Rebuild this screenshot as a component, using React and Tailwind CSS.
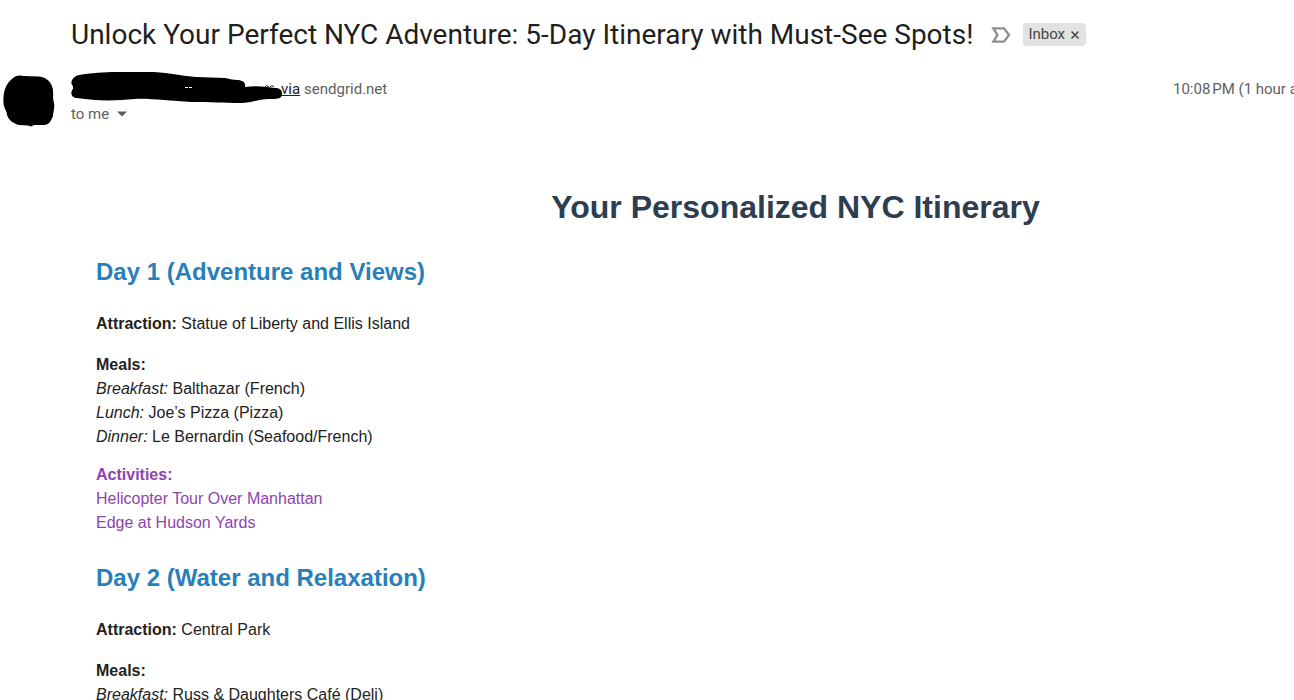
const days = [
  {
    title: 'Day 1 (Adventure and Views)',
    attraction: 'Statue of Liberty and Ellis Island',
    meals: [
      ['Breakfast:', 'Balthazar (French)'],
      ['Lunch:', 'Joe’s Pizza (Pizza)'],
      ['Dinner:', 'Le Bernardin (Seafood/French)'],
    ],
    activities: ['Helicopter Tour Over Manhattan', 'Edge at Hudson Yards'],
  },
  {
    title: 'Day 2 (Water and Relaxation)',
    attraction: 'Central Park',
    meals: [['Breakfast:', 'Russ & Daughters Café (Deli)']],
    activities: [],
  },
];

function ImportantMarker() {
  return (
    <button type="button" aria-label="Mark as important" className="flex h-6 w-5 shrink-0 items-center justify-center">
      <svg viewBox="0 0 20 16" className="h-4 w-5" fill="none" stroke="#8e9193" strokeWidth="2.4">
        <path d="M2.400 1.400H13L18 8L13 14.600H2.400L6.400 8Z" />
      </svg>
    </button>
  );
}

function Avatar() {
  return (
    <svg viewBox="0 0 52 54" className="h-[54px] w-[52px] shrink-0" aria-hidden="true">
      <path d="M10 3C13 0 17 0 21 1L36 1.500C44 2 49 8 50 15C50.500 20 49.500 24 51 28C52 34 50 37 50 41C48 46 46 50 41 50L31 50L28 51.500L25 50.500L16 50C9 48 6 45 4 40C4 36 1 34 0.500 28C0 18 2 9 10 3Z" />
    </svg>
  );
}

function HiddenSender() {
  return (
    <svg viewBox="0 0 212 34" className="h-[34px] w-[212px] shrink-0" aria-hidden="true">
      <path d="M8 3C24 0 55 -1 83 0C99 1 112 4 125 5L154 6C159 7 163 8 166 8C172 8 175 11 174 15C186 13 197 15 204 16C212 16 212 22 210 25C208 27 203 27 198 27C187 27 181 31 170 31C152 31 139 30 121 30C97 29 78 26 64 27C43 29 25 29 6 26C0 26 -1 20 2 17L2 14C-1 12 0 5 8 3Z" />
      <path d="M114 15.500H117M118 15.500H121" stroke="#fff" strokeWidth="1" />
      <path d="M194 15L196 13.500L198 15M199 15L201 13.500L203 15" stroke="#222" fill="none" />
    </svg>
  );
}

function Day({ day }) {
  return (
    <section className="mb-[27px]">
      <h2 className="mb-6 text-2xl leading-8 font-bold text-[#2980b9]">{day.title}</h2>
      <p className="mb-[17px]">
        <strong>Attraction:</strong> {day.attraction}
      </p>
      <div className="mb-[14px]">
        <strong>Meals:</strong>
        {day.meals.map(([meal, place]) => (
          <p key={meal}>
            <em>{meal}</em> {place}
          </p>
        ))}
      </div>
      {day.activities.length > 0 && (
        <div className="text-[#8e44ad]">
          <strong>Activities:</strong>
          {day.activities.map((a) => (
            <p key={a}>{a}</p>
          ))}
        </div>
      )}
    </section>
  );
}

export default function App() {
  return (
    <div className="h-screen overflow-hidden bg-white font-[Roboto,sans-serif] text-[#222222]">
      <div className="w-[116%]">
        <header className="flex items-center pt-[17px] pl-[71px]">
          <h1 className="text-[28px] leading-9 whitespace-nowrap text-[#1f1f1f]">
            Unlock Your Perfect NYC Adventure: 5-Day Itinerary with Must-See Spots!
          </h1>
          <div className="mb-px ml-[18px] flex items-center gap-3">
            <ImportantMarker />
            <span className="flex h-[23px] items-center gap-1 rounded bg-[#e1e3e1] px-[5px] text-[15px] text-[#444746]">
              Inbox
              <button type="button" aria-label="Remove label Inbox" className="flex h-4 w-3 items-center justify-center">
                <svg viewBox="0 0 10 10" className="h-[10px] w-[10px]" stroke="#444746" strokeWidth="1.5">
                  <path d="M1.500 1.500L8.500 8.500M8.500 1.500L1.500 8.500" />
                </svg>
              </button>
            </span>
          </div>
        </header>

        <div className="mt-[19px] flex items-start gap-4 pl-[3px] text-[15px] leading-5 text-[#5e5e5e]">
          <div className="pt-[3px]">
            <Avatar />
          </div>
          <div>
            <div className="flex h-[33px] items-center">
              <HiddenSender />
              <a href="#via" className="-ml-[2px] text-[#222222] underline">via</a>
              <span className="ml-1">sendgrid.net</span>
            </div>
            <button type="button" className="flex h-[18px] items-center gap-2">
              to me
              <svg viewBox="0 0 10 6" className="h-[6px] w-[10px]" fill="#5e5e5e">
                <path d="M0 0.500H10L5 5.500Z" />
              </svg>
            </button>
          </div>
          <time className="mr-[181px] ml-auto flex h-[33px] items-center whitespace-nowrap">
            {'10:08\u202fPM (1 hour ago)'}
          </time>
        </div>

        <main className="pt-[58px] pr-[6px] pl-24 font-['Liberation_Sans',sans-serif] text-base leading-6">
          <h1 className="mb-[29px] text-center text-[32px] leading-10 font-bold text-[#2c3e50]">
            Your Personalized NYC Itinerary
          </h1>
          {days.map((d) => (
            <Day key={d.title} day={d} />
          ))}
        </main>
      </div>
    </div>
  );
}
